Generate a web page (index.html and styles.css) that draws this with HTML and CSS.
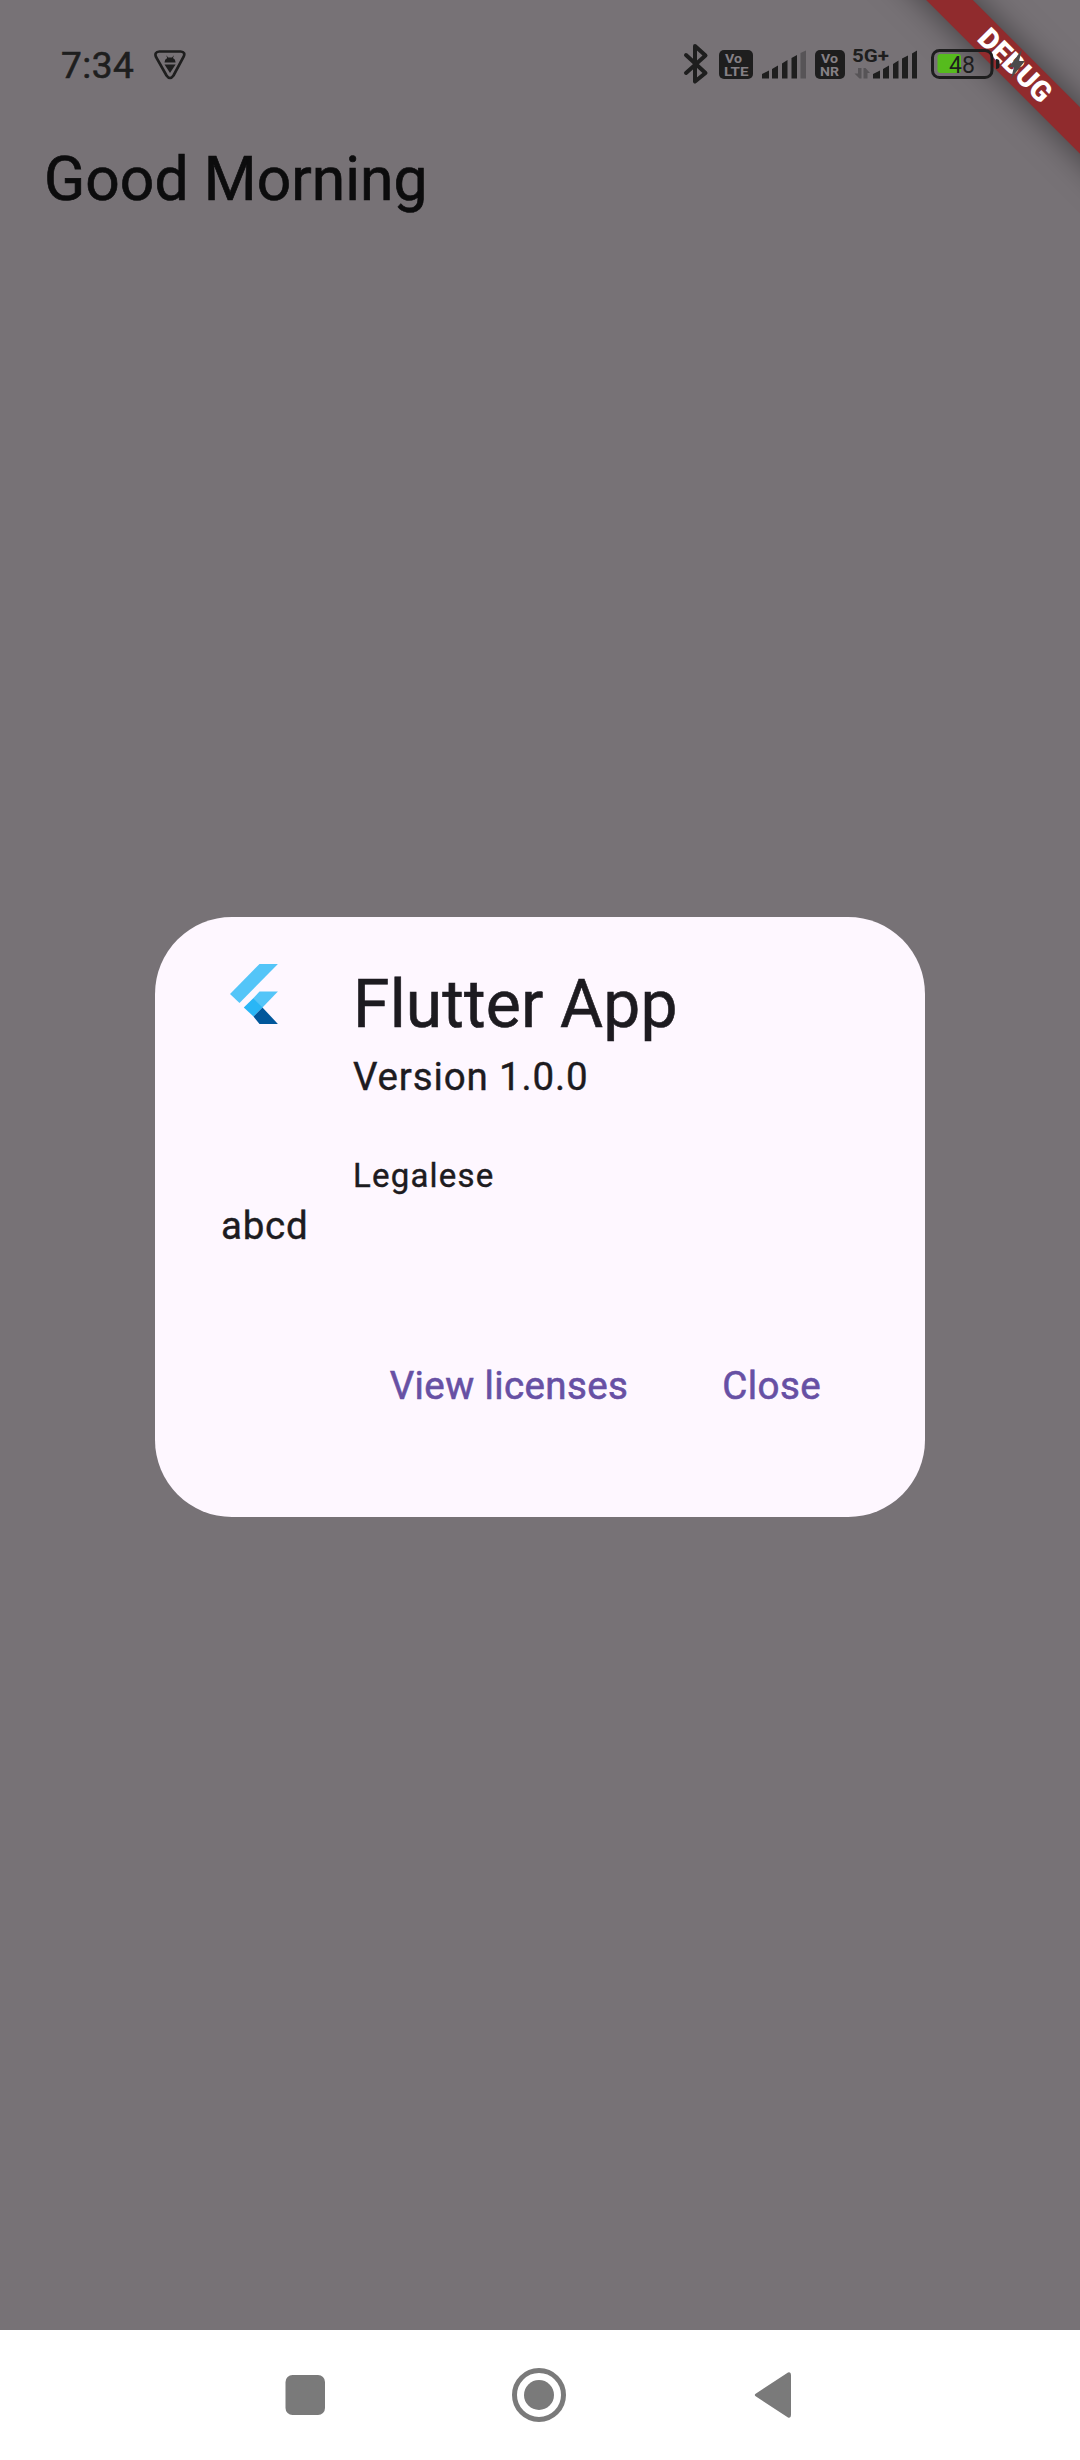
FILE: index.html
```html
<!DOCTYPE html>
<html lang="en">
<head>
<meta charset="utf-8">
<title>Good Morning</title>
<link rel="stylesheet" href="styles.css">
</head>
<body>
<div class="screen">
  <div class="banner-clip"><div class="banner">DEBUG</div></div>
  <header class="status-bar">
    <div class="status-left">
      <span class="clock">7:34</span>
      <svg class="usb-icon" width="32" height="30" viewBox="0 0 32 30">
        <path d="M5.500 1.500H26.500Q32 2 29.500 7L19.500 25.500Q16 30.500 12.500 25.500L2 7Q0 2 5.500 1.500Z" fill="none" stroke="#1e1e1e" stroke-width="2.700"/>
        <path d="M10.500 12.500Q10.500 9.500 13.200 8.100L12.200 5.300L14.200 7.500H18L20 5.300L19 8.100Q21.600 9.500 21.600 12.500ZM10.500 14.500H21.600L16 23Z" fill="#1e1e1e"/>
      </svg>
    </div>
    <svg class="status-right" width="370" height="50" viewBox="680 40 370 50">
      <path d="M686 55L705.500 73L695 81.500V46L705.500 55.500L686 73" fill="none" stroke="#1e1e1e" stroke-width="4" stroke-linejoin="round" stroke-linecap="round"/>
      <g fill="#1e1e1e">
        <rect x="719" y="50" width="34" height="29" rx="5"/>
        <rect x="815" y="50" width="30" height="29" rx="5"/>
        <path d="M762 78.500V74L769 70.500V78.500ZM772 78.500V69L778 65.500V78.500ZM782 78.500V63.500L787.500 60V78.500ZM791.500 78.500V58L797 55V78.500Z"/>
        <path d="M873 78.500V74L880 70.500V78.500ZM883 78.500V69L889 65.500V78.500ZM893 78.500V64L898.500 60.500V78.500ZM902 78.500V58.500L908 55.500V78.500ZM912 78.500V53.500L917 50.500V78.500Z"/>
      </g>
      <path d="M800.500 78.500V53L806 50.500V78.500Z" fill="#575457"/>
      <path d="M854.500 73.500H858V68H861.500V78.500H859.500ZM863.500 68H865.500L870 73H867.500V78.500H863.500Z" fill="#575457"/>
      <g class="badge-text">
        <text x="725" y="62.500" textLength="17" lengthAdjust="spacingAndGlyphs">Vo</text>
        <text x="724" y="76" textLength="24.500" lengthAdjust="spacingAndGlyphs">LTE</text>
        <text x="821" y="62.500" textLength="17" lengthAdjust="spacingAndGlyphs">Vo</text>
        <text x="820" y="76" textLength="19" lengthAdjust="spacingAndGlyphs">NR</text>
      </g>
      <text class="net-text" x="852" y="61.700" textLength="37" lengthAdjust="spacingAndGlyphs">5G+</text>
      <rect x="937.500" y="54" width="23.500" height="19" rx="3" fill="#56bb1d"/>
      <rect x="932.500" y="50.500" width="59.500" height="27" rx="7" fill="none" stroke="#1e1e1e" stroke-width="3"/>
      <path d="M996 59Q999.500 59 999.500 62V66Q999.500 69 996 69Z" fill="#1e1e1e"/>
      <text class="battery-text" x="949" y="72.500">48</text>
      <path d="M1022 49.500L1009 67H1014L1011 78.500L1025 61H1019Z" fill="#4b4b4b"/>
    </svg>
  </header>
  <h1 class="title">Good Morning</h1>
  <main class="overlay">
    <section class="dialog">
      <div class="about">
        <svg class="logo" width="66" height="66" viewBox="0 0 66 66">
          <path d="M38.500 3H56.900L18.500 42L9 33Z" fill="#54c5f8"/>
          <path d="M38.500 30.500H56.900L41 47L32.500 37Z" fill="#54c5f8"/>
          <path d="M22.800 46.500L32.500 37L41.500 46.500L32.500 55.500Z" fill="#29b6f6"/>
          <path d="M41.500 46.500L56.900 63H38.500L32.500 55.500Z" fill="#01579b"/>
        </svg>
        <div class="about-text">
          <h2 class="app-name">Flutter App</h2>
          <p class="version">Version 1.0.0</p>
          <p class="legalese">Legalese</p>
        </div>
      </div>
      <p class="body">abcd</p>
      <div class="actions"><span class="action">View licenses</span><span class="action">Close</span></div>
    </section>
  </main>
  <nav class="nav-bar">
    <svg width="1080" height="130" viewBox="0 2330 1080 130">
      <g fill="#7a7a7a">
        <rect x="285.500" y="2375" width="39.500" height="40" rx="7"/>
        <circle cx="539" cy="2395" r="15"/>
        <circle cx="539" cy="2395" r="24.500" fill="none" stroke="#7a7a7a" stroke-width="5"/>
        <path d="M756 2393.500L788 2372.500Q791 2371.500 791 2375V2415Q791 2418.500 788 2417.500L756 2396.500Q753.500 2395 756 2393.500Z"/>
      </g>
    </svg>
  </nav>
</div>
</body>
</html>
```
FILE: styles.css
```css
* { box-sizing: border-box; margin: 0; padding: 0; }
body { font-family: Roboto, sans-serif; }
.screen {
  position: relative;
  width: 1080px;
  height: 2460px;
  display: flex;
  flex-direction: column;
  background: #777276;
  overflow: hidden;
}
.status-bar {
  position: relative;
  height: 126px;
  padding: 40px 30px 0 61px;
  display: flex;
  justify-content: space-between;
  align-items: flex-start;
}
.status-left { display: flex; align-items: center; height: 50px; gap: 20px; }
.clock { font-size: 37px; letter-spacing: .5px; color: #1e1e1e; -webkit-text-stroke: .6px #1e1e1e; }
.status-right { display: block; }
.badge-text { font-size: 13.5px; font-weight: 700; fill: #858085; }
.net-text { font-size: 18.5px; font-weight: 700; fill: #1e1e1e; }
.battery-text { font-size: 23px; fill: #1e1e1e; }
.title {
  height: 104px;
  padding-left: 44px;
  font-size: 60.5px;
  font-weight: 400;
  line-height: 107px;
  letter-spacing: .08px;
  color: #0c0c0d;
  -webkit-text-stroke: .7px #0c0c0d;
}
.overlay { flex: 1; padding: 687px 155px 0; }
.dialog {
  height: 600px;
  padding: 44px 66px 66px;
  border-radius: 77px;
  background: #fef7ff;
  color: #1d1b20;
  display: flex;
  flex-direction: column;
  -webkit-text-stroke: .4px currentColor;
}
.about { display: flex; gap: 66px; }
.logo { display: block; }
.app-name { font-size: 66px; font-weight: 400; line-height: 88px; letter-spacing: .15px; -webkit-text-stroke-width: .6px; }
.version { font-size: 38.5px; line-height: 55px; letter-spacing: .85px; }
.legalese { margin-top: 49.5px; font-size: 33px; line-height: 44px; letter-spacing: 1.2px; }
.body { font-size: 38.5px; line-height: 55px; letter-spacing: .75px; }
.actions {
  margin-top: auto;
  height: 132px;
  display: flex;
  justify-content: flex-end;
  align-items: center;
  gap: 94px;
  padding-right: 38px;
}
.action {
  font-size: 38.5px;
  line-height: 55px;
  letter-spacing: .4px;
  color: #6750a4;
  -webkit-text-stroke: .6px #6750a4;
}
.nav-bar { height: 130px; background: #fff; }
.nav-bar svg { display: block; }
.banner-clip { position: absolute; top: 0; right: 0; width: 300px; height: 300px; overflow: hidden; }
.banner {
  position: absolute;
  left: 35px;
  top: 49px;
  width: 400px;
  height: 33px;
  transform: rotate(45deg);
  background: #902b2d;
  box-shadow: 0 0 33px rgba(0, 0, 0, .5);
  color: #fff;
  font-size: 28.5px;
  font-weight: 900;
  line-height: 33px;
  text-align: center;
}
```
